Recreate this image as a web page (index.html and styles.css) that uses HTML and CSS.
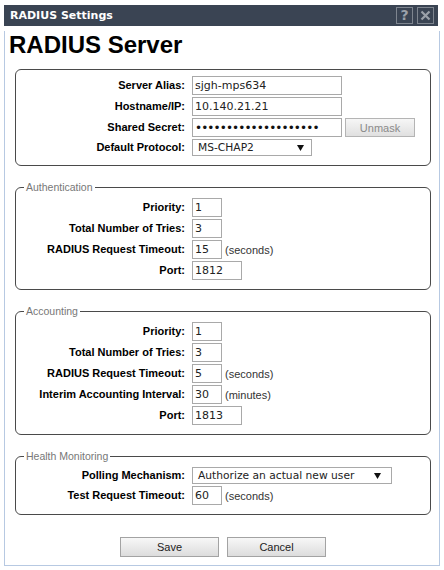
FILE: index.html
```html
<!DOCTYPE html>
<html lang="en">
<head>
<meta charset="utf-8">
<title>RADIUS Settings</title>
<link rel="stylesheet" href="styles.css">
</head>
<body>
<div class="dialog">
  <div class="titlebar">
    <span class="title">RADIUS Settings</span>
    <div class="tools">
      <span class="tool help">?</span>
      <span class="tool close"><svg width="11" height="11" viewBox="0 0 11 11"><path d="M1.5 1.5 L9.5 9.5 M9.5 1.5 L1.5 9.5" stroke="#9ba1a9" stroke-width="2.2" fill="none"/></svg></span>
    </div>
  </div>
  <div class="panel">
    <h1 class="heading">RADIUS Server</h1>

    <fieldset class="group">
      <div class="rows">
        <label class="lbl">Server Alias:</label>
        <div class="field"><input class="txt" type="text" value="sjgh-mps634"></div>
        <label class="lbl">Hostname/IP:</label>
        <div class="field"><input class="txt" type="text" value="10.140.21.21"></div>
        <label class="lbl">Shared Secret:</label>
        <div class="field"><input class="txt secret" type="password" value="xxxxxxxxxxxxxxxxxxxx"><button class="unmask" type="button">Unmask</button></div>
        <label class="lbl">Default Protocol:</label>
        <div class="field"><div class="sel"><span>MS-CHAP2</span><svg class="arrow" width="7" height="6" viewBox="0 0 7 6"><polygon points="0,0 7,0 3.5,6" fill="#111"/></svg></div></div>
      </div>
    </fieldset>

    <fieldset class="group titled">
      <legend class="legend">Authentication</legend>
      <div class="rows">
        <label class="lbl">Priority:</label>
        <div class="field"><input class="txt w30" type="text" value="1"></div>
        <label class="lbl">Total Number of Tries:</label>
        <div class="field"><input class="txt w30" type="text" value="3"></div>
        <label class="lbl">RADIUS Request Timeout:</label>
        <div class="field"><input class="txt w30" type="text" value="15"><span class="unit">(seconds)</span></div>
        <label class="lbl">Port:</label>
        <div class="field"><input class="txt w50" type="text" value="1812"></div>
      </div>
    </fieldset>

    <fieldset class="group titled">
      <legend class="legend">Accounting</legend>
      <div class="rows">
        <label class="lbl">Priority:</label>
        <div class="field"><input class="txt w30" type="text" value="1"></div>
        <label class="lbl">Total Number of Tries:</label>
        <div class="field"><input class="txt w30" type="text" value="3"></div>
        <label class="lbl">RADIUS Request Timeout:</label>
        <div class="field"><input class="txt w30" type="text" value="5"><span class="unit">(seconds)</span></div>
        <label class="lbl">Interim Accounting Interval:</label>
        <div class="field"><input class="txt w30" type="text" value="30"><span class="unit">(minutes)</span></div>
        <label class="lbl">Port:</label>
        <div class="field"><input class="txt w50" type="text" value="1813"></div>
      </div>
    </fieldset>

    <fieldset class="group titled">
      <legend class="legend">Health Monitoring</legend>
      <div class="rows">
        <label class="lbl">Polling Mechanism:</label>
        <div class="field"><div class="sel wide"><span>Authorize an actual new user</span><svg class="arrow" width="7" height="6" viewBox="0 0 7 6"><polygon points="0,0 7,0 3.5,6" fill="#111"/></svg></div></div>
        <label class="lbl">Test Request Timeout:</label>
        <div class="field"><input class="txt w30" type="text" value="60"><span class="unit">(seconds)</span></div>
      </div>
    </fieldset>

    <div class="actions">
      <button class="btn" type="button">Save</button>
      <button class="btn" type="button">Cancel</button>
    </div>
  </div>
</div>
</body>
</html>
```
FILE: styles.css
```css
html, body {
  margin: 0;
  padding: 0;
  background: #ffffff;
}

.dialog {
  margin: 5px 0 0 4px;
  width: 436px;
}

.titlebar {
  box-sizing: border-box;
  height: 21px;
  width: 434px;
  background: #3a4453;
  display: flex;
  align-items: center;
  justify-content: space-between;
  padding: 0 4px 0 6px;
}

.title {
  font-family: "DejaVu Sans", Verdana, sans-serif;
  font-weight: bold;
  font-size: 11px;
  color: #ffffff;
  line-height: 13px;
}

.tools {
  display: flex;
  gap: 4px;
  margin-top: -1px;
}

.tool {
  box-sizing: border-box;
  width: 17px;
  height: 17px;
  border: 1px solid #7e858f;
  display: flex;
  align-items: center;
  justify-content: center;
}

.help {
  font-family: "DejaVu Sans", Verdana, sans-serif;
  font-weight: bold;
  font-size: 14px;
  line-height: 14px;
  color: #9ba1a9;
}

.panel {
  border: 1px solid #b7c9e2;
  border-top: 0;
  padding: 0 8px 8px 4px;
}

.heading {
  margin: 5px 0 10px 0;
  font-family: "Liberation Sans", Arial, sans-serif;
  font-weight: bold;
  font-size: 24px;
  line-height: 28px;
  color: #000000;
}

.group {
  margin: 0 0 0 6px;
  padding: 6px 0 9px 0;
  border: 1px solid #4a4a4a;
  border-radius: 6px;
  min-width: 0;
}

.group.titled {
  margin-top: 15px;
  padding-top: 5px;
}

.legend {
  margin-left: 8px;
  padding: 0 2px;
  font-family: "Liberation Sans", Arial, sans-serif;
  font-size: 10.5px;
  line-height: 12px;
  color: #777777;
}

.rows {
  display: grid;
  grid-template-columns: 169px auto;
  column-gap: 7px;
  row-gap: 2px;
  align-items: center;
  justify-content: start;
}

.lbl {
  text-align: right;
  font-family: "Liberation Sans", Arial, sans-serif;
  font-weight: bold;
  font-size: 11px;
  line-height: 13px;
  color: #000000;
  white-space: nowrap;
}

.field {
  display: flex;
  align-items: center;
}

.txt {
  box-sizing: border-box;
  height: 19px;
  width: 150px;
  margin: 0;
  border: 1px solid #a9a9a9;
  border-radius: 0;
  padding: 0 2px;
  font-family: "DejaVu Sans", Verdana, sans-serif;
  font-size: 11px;
  color: #222222;
  background: #ffffff;
  outline: none;
}

.txt.secret {
  font-size: 12px;
  letter-spacing: -0.9px;
  color: #111111;
}

.txt.w30 { width: 30px; }
.txt.w50 { width: 50px; }

.unit {
  margin-left: 3px;
  font-family: "Liberation Sans", Arial, sans-serif;
  font-size: 11px;
  color: #333333;
}

.unmask {
  box-sizing: border-box;
  margin: 0 0 0 3px;
  width: 70px;
  height: 19px;
  padding: 0;
  border: 1px solid #b4b4b4;
  border-radius: 0;
  background: linear-gradient(#f6f6f6, #e0e0e0);
  font-family: "Liberation Sans", Arial, sans-serif;
  font-size: 11px;
  color: #8a8a8a;
}

.sel {
  box-sizing: border-box;
  height: 17px;
  width: 120px;
  border: 1px solid #a9a9a9;
  background: #ffffff;
  display: flex;
  align-items: center;
  justify-content: space-between;
  padding: 0 7px 0 5px;
  font-family: "DejaVu Sans", Verdana, sans-serif;
  font-size: 10.7px;
  color: #222222;
}

.sel.wide {
  width: 200px;
  padding-right: 10px;
}

.arrow {
  display: block;
}

.actions {
  display: flex;
  justify-content: center;
  gap: 8px;
  margin-top: 22px;
  padding-left: 6px;
}

.btn {
  box-sizing: border-box;
  width: 99px;
  height: 20px;
  margin: 0;
  padding: 0;
  border: 1px solid #a3a3a3;
  border-radius: 0;
  background: linear-gradient(#f7f7f7, #dcdcdc);
  font-family: "Liberation Sans", Arial, sans-serif;
  font-size: 11px;
  color: #222222;
}
```
